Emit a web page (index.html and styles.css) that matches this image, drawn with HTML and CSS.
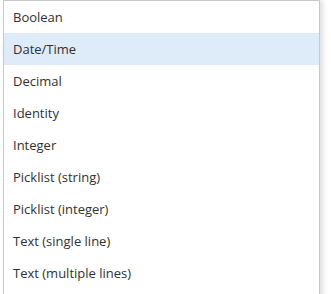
FILE: index.html
```html
<!DOCTYPE html>
<html lang="en">
<head>
    <meta charset="UTF-8">
    <title>Data types</title>
    <link rel="stylesheet" href="styles.css">
</head>
<body>
    <div class="dropdown">
        <div class="option">Boolean</div>
        <div class="option selected">Date/Time</div>
        <div class="option">Decimal</div>
        <div class="option">Identity</div>
        <div class="option">Integer</div>
        <div class="option">Picklist (string)</div>
        <div class="option">Picklist (integer)</div>
        <div class="option">Text (single line)</div>
        <div class="option">Text (multiple lines)</div>
    </div>
</body>
</html>
```

FILE: styles.css
```css
* {
    box-sizing: border-box;
    margin: 0;
    padding: 0;
}
body {
    background: #fff;
    font-family: 'Open Sans', sans-serif;
    color: #323130;
}
.dropdown {
    width: 317px;
    margin-left: 3px;
    padding-bottom: 8px;
    border: 1px solid #c8c8c8;
    background: #fff;
    box-shadow: 3px 0 5px rgba(0, 0, 0, 0.13);
}
.option {
    height: 32px;
    line-height: 32px;
    padding-left: 9px;
    font-size: 13px;
    white-space: nowrap;
}
.selected {
    background: #deecf9;
}
```
